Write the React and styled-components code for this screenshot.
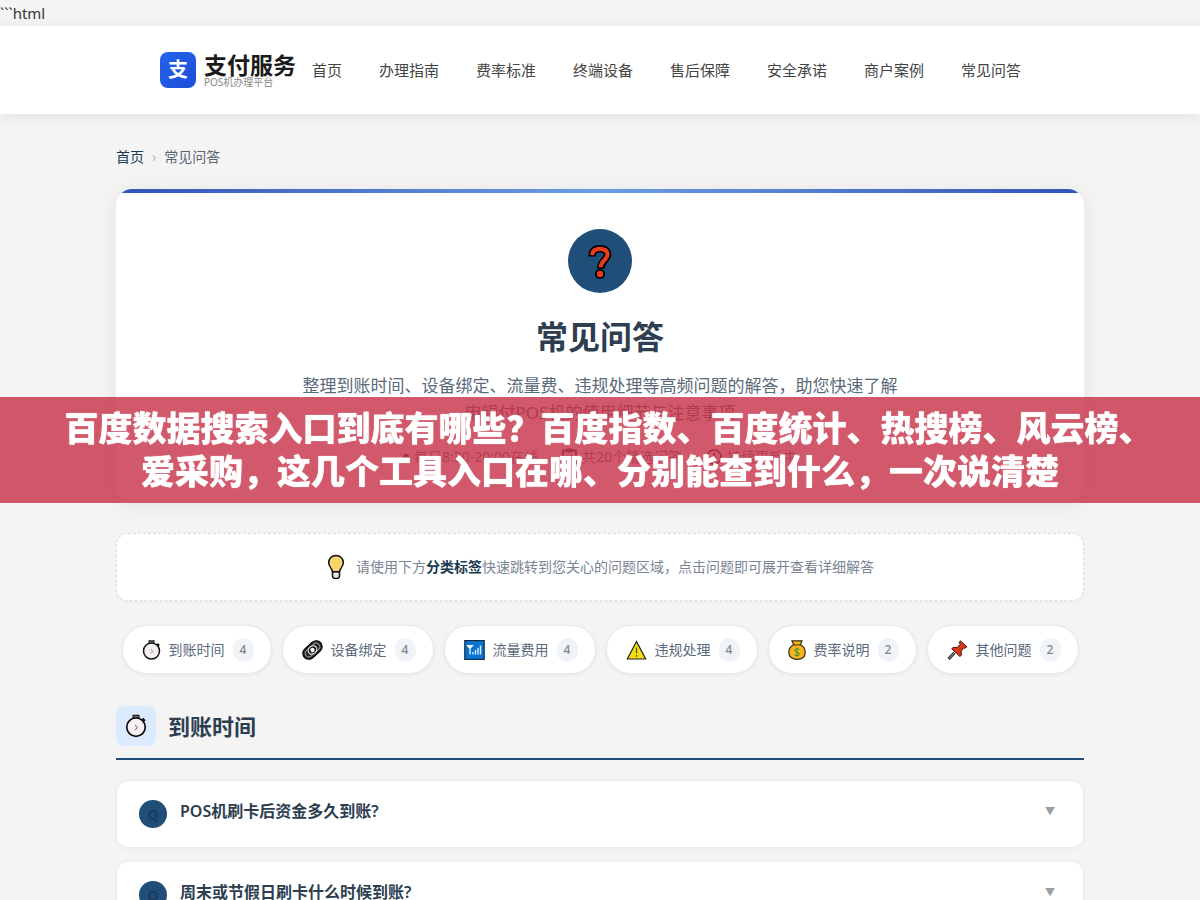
import React, { useState } from "react";
import styled, { createGlobalStyle } from "styled-components";

const navy = "#1f4e79";

const GlobalStyle = createGlobalStyle`
  * { box-sizing: border-box; }
  body {
    margin: 0;
    background: #f4f4f4;
    color: #333;
    font: 15px/26px "Noto Sans", "Noto Sans CJK SC", sans-serif;
  }
  a { color: inherit; text-decoration: none; }
  button { font: inherit; color: inherit; cursor: pointer; }
`;

const Header = styled.header`
  background: #fff;
  box-shadow: 0 2px 12px rgba(0, 0, 0, 0.08);
`;
const HeaderInner = styled.div`
  max-width: 880px;
  min-height: 88px;
  margin: 0 auto;
  display: flex;
  align-items: center;
  gap: 16px;
`;
const Logo = styled.a`
  display: flex;
  align-items: center;
  gap: 8px;
  white-space: nowrap;
`;
const LogoMark = styled.span`
  width: 36px;
  height: 36px;
  border-radius: 8px;
  background: linear-gradient(135deg, #2563eb, #1d4ed8);
  color: #fff;
  font-size: 20px;
  font-weight: 700;
  line-height: 36px;
  text-align: center;
`;
const LogoText = styled.span`
  display: flex;
  flex-direction: column;
`;
const LogoName = styled.strong`
  font-size: 23px;
  line-height: 24px;
  color: #1a1a1a;
`;
const LogoSub = styled.small`
  font-size: 10px;
  line-height: 10px;
  color: #888;
`;
const Nav = styled.nav`
  display: flex;
  gap: 37px;
  font-size: 15px;
  color: #444;
  white-space: nowrap;
`;

const Main = styled.main`
  max-width: 1000px;
  margin: 0 auto;
  padding: 32px 16px;
`;
const Breadcrumb = styled.nav`
  display: flex;
  gap: 8px;
  margin-bottom: 21px;
  font-size: 14px;
  line-height: 22px;
  color: #5a6570;
  a { color: #1a3a52; }
  i { font-style: normal; color: #bbb; }
`;

const Hero = styled.section`
  display: flex;
  flex-direction: column;
  align-items: center;
  padding-bottom: 31px;
  border-radius: 16px;
  background: #fff;
  box-shadow: 0 4px 20px rgba(0, 0, 0, 0.08);
  overflow: hidden;
  &::before {
    content: "";
    align-self: stretch;
    height: 4px;
    margin-bottom: 36px;
    background: linear-gradient(90deg, #2f55b8, #6c9ce6 50%, #2f55b8);
  }
`;
const HeroBadge = styled.div`
  display: grid;
  place-items: center;
  width: 64px;
  height: 64px;
  border-radius: 50%;
  background: ${navy};
`;
const HeroTitle = styled.h1`
  margin: 21px 0 12px;
  font-size: 32px;
  line-height: 46px;
  color: #2c3e50;
`;
const HeroText = styled.p`
  max-width: 600px;
  margin: 0 0 18px;
  font-size: 17px;
  line-height: 27px;
  text-align: center;
  color: #5a6a7a;
`;
const HeroMeta = styled.div`
  display: flex;
  gap: 24px;
  font-size: 14px;
  color: #6a7683;
`;
const MetaItem = styled.span`
  display: flex;
  align-items: center;
  gap: 5px;
`;
const Dot = styled.span`
  width: 6px;
  height: 6px;
  border-radius: 50%;
  background: #333;
`;

const Hint = styled.p`
  display: flex;
  align-items: center;
  justify-content: center;
  gap: 10px;
  min-height: 68px;
  margin: 32px 0 24px;
  border: 1px dashed #dcdcdc;
  border-radius: 12px;
  background: #fff;
  box-shadow: 0 1px 4px rgba(0, 0, 0, 0.04);
  font-size: 14px;
  color: #7a8594;
  strong { color: #1a3a52; }
`;

const Tabs = styled.nav`
  display: flex;
  flex-wrap: wrap;
  justify-content: center;
  gap: 10px;
  margin-bottom: 32px;
`;
const Tab = styled.a`
  display: flex;
  align-items: center;
  gap: 8px;
  height: 49px;
  padding: 0 17px 0 19px;
  border: 1px solid #e8e8e8;
  border-radius: 25px;
  background: #fff;
  box-shadow: 0 1px 4px rgba(0, 0, 0, 0.06);
  font-size: 14px;
  color: #5a6a7a;
`;
const Count = styled.span`
  min-width: 21px;
  border-radius: 12px;
  background: #f0f4f8;
  font-size: 12px;
  line-height: 24px;
  font-weight: 500;
  text-align: center;
  color: #808790;
`;

const SectionHead = styled.header`
  display: flex;
  align-items: center;
  gap: 12px;
  margin-bottom: 20px;
  padding-bottom: 12px;
  border-bottom: 2px solid ${navy};
`;
const SectionIcon = styled.span`
  display: grid;
  place-items: center;
  width: 40px;
  height: 40px;
  border-radius: 8px;
  background: #dbeafe;
`;
const SectionTitle = styled.h2`
  margin: 0;
  font-size: 22px;
  line-height: 32px;
  color: #2c3e50;
`;
const List = styled.div`
  display: grid;
  gap: 13px;
`;
const Question = styled.button`
  display: flex;
  align-items: flex-start;
  gap: 13px;
  width: 100%;
  padding: 19px 28px 19px 22px;
  border: 1px solid #ececec;
  border-radius: 12px;
  background: #fff;
  box-shadow: 0 1px 4px rgba(0, 0, 0, 0.04);
  text-align: left;
`;
const QMark = styled.span`
  width: 28px;
  height: 28px;
  border-radius: 50%;
  background: ${navy};
  color: #1a3a5c;
  font-size: 14px;
  font-weight: 700;
  line-height: 30px;
  text-align: center;
`;
const QText = styled.span`
  flex: 1;
  font-size: 16px;
  font-weight: 600;
  line-height: 22px;
  color: #2c3e50;
`;
const Arrow = styled.span`
  font-size: 10px;
  line-height: 22px;
  color: #999ca3;
`;

const Banner = styled.div`
  position: fixed;
  left: 0;
  right: 0;
  top: 397px;
  padding: 10px 46px;
  background: rgba(197, 48, 70, 0.8);
  color: #fff;
  font-size: 34px;
  font-weight: 900;
  line-height: 43px;
  text-align: center;
  text-indent: 17px;
  text-shadow: 0 0 1px #fff;
`;

const StopwatchIcon = ({ w = 19, h = 20 }) => (
  <svg width={w} height={h} viewBox="0 0 19 20" fill="none" stroke="#111">
    <rect x="7" y="0.8" width="5" height="3" fill="#777" />
    <path d="M14.800 4l2 2" strokeWidth="3" />
    <circle cx="9.5" cy="11" r="8" fill="#f5f0f2" strokeWidth="1.5" />
    <path d="M8.600 9l2.200 2.400-2.200 2.200" stroke="#a87e8c" />
  </svg>
);
const LinkIcon = () => (
  <svg width="21" height="20" viewBox="0 0 21 20" fill="none">
    <g transform="rotate(-42 10.5 10)">
      <rect x="-0.5" y="4" width="22" height="12" rx="6" fill="#222" stroke="#000" />
      <rect x="2" y="6.400" width="17" height="7.200" rx="3.600" stroke="#999" />
      <ellipse cx="10.5" cy="10" rx="4.600" ry="3.800" fill="#111" stroke="#eee" strokeWidth="1.200" />
      <circle cx="10.5" cy="10" r="2.200" fill="#fff" />
    </g>
  </svg>
);
const SignalIcon = () => (
  <svg width="21" height="20" viewBox="0 0 21 20" fill="none">
    <rect x="0.8" y="0.5" width="19.4" height="19" fill="#0a74d0" stroke="#12283f" strokeWidth="1.2" />
    <path d="M3.5 5.5h5L6 8.5zM6 6v8.5" stroke="#fff" strokeWidth="1.2" />
    <path d="M9 14.5V12M11.5 14.5V10M14 14.5V8M16.5 14.5V5.5" stroke="#d9ecff" strokeWidth="1.4" />
  </svg>
);
const WarningIcon = () => (
  <svg width="21" height="20" viewBox="0 0 21 20" fill="none">
    <path d="M10.5 1.5L19.7 19H1.3z" fill="#f3dc14" stroke="#222" strokeWidth="1.2" />
    <path d="M10.5 7.5v6M10.5 15v1.8" stroke="#5a5010" strokeWidth="1.2" />
  </svg>
);
const MoneyIcon = () => (
  <svg width="18" height="20" viewBox="0 0 18 20" fill="none">
    <path d="M4 0.8h10l-1.6 4C16 6.6 17.2 9.5 17.2 12.5c0 4.5-3.5 6.8-8.2 6.8s-8.2-2.300-8.200-6.800C0.800 9.500 2 6.600 5.600 4.800z" fill="#f6b51c" stroke="#3a2a10" strokeWidth="1.2" />
    <path d="M5.300 4.900h7.400" stroke="#3a2a10" />
    <path d="M11.300 9.600c-1-1.200-4.400-1-4.400 1 0 2.100 4.500 1.200 4.500 3.300 0 2-3.600 2.100-4.700.7M9 7.800v9" stroke="#4c9a2a" strokeWidth="1.200" />
  </svg>
);
const PinIcon = () => (
  <svg width="21" height="20" viewBox="0 0 21 20" fill="none">
    <path d="M7.500 12.800L1.500 19" stroke="#222" strokeWidth="3" />
    <path d="M7.500 12.800L2 18.500" stroke="#bbb" strokeWidth="1" />
    <path d="M13.300 0.800l6.600 6-2 1.400-1.300-.3-2.500 3.400.3 3.900-1.500 1.200L4.700 8.800l1.500-1.300 3.800.1 3.100-3.200-.7-2z" fill="#d8371c" stroke="#4a160c" />
  </svg>
);
const BulbIcon = () => (
  <svg width="20" height="26" viewBox="0 0 20 26" fill="none">
    <path d="M6.500 17.500v4.700c0 1.400 1.200 2.300 3.500 2.300s3.500-.9 3.500-2.300v-4.700z" fill="#e8e8e8" stroke="#111" strokeWidth="1.500" />
    <path d="M10 1.500c-4.300 0-7.300 3.100-7.300 7.200 0 4 3.300 5.300 3.800 9h7c.5-3.700 3.800-5 3.800-9 0-4.100-3-7.200-7.300-7.200z" fill="#fcd56a" stroke="#111" strokeWidth="1.500" />
  </svg>
);
const QuestionIcon = () => (
  <svg width="24" height="38" viewBox="0 0 24 38" fill="none">
    <path d="M4.200 14.500C4.200 8.500 7 6.800 12 6.800c4.500 0 7.500 2 7.500 5.700 0 5-6.800 6.500-6.800 14.300" stroke="#000" strokeWidth="7.600" />
    <circle cx="12" cy="32" r="5" fill="#000" />
    <path d="M4 13C4.500 8.700 7.300 6.800 12 6.800c4.500 0 7.500 2 7.500 5.700 0 5-6.800 6.500-6.800 12.800" stroke="#ea3b20" strokeWidth="4.200" />
    <circle cx="12" cy="32" r="3.200" fill="#ea3b20" />
  </svg>
);
const ClipboardIcon = () => (
  <svg width="15" height="18" viewBox="0 0 15 18" fill="none" stroke="#222">
    <rect x="1" y="2.500" width="13" height="14.500" strokeWidth="1.600" />
    <path d="M5 1h5v3H5zM4 8h7M4 11h7M4 14h4" />
  </svg>
);
const ClockIcon = () => (
  <svg width="16" height="18" viewBox="0 0 16 18" fill="none" stroke="#222" strokeWidth="1.500">
    <circle cx="8" cy="9" r="7" />
    <path d="M8 4.500V9l3 2" />
  </svg>
);

const navItems = ["首页", "办理指南", "费率标准", "终端设备", "售后保障", "安全承诺", "商户案例", "常见问答"];
const tabs = [
  [StopwatchIcon, "到账时间", 4],
  [LinkIcon, "设备绑定", 4],
  [SignalIcon, "流量费用", 4],
  [WarningIcon, "违规处理", 4],
  [MoneyIcon, "费率说明", 2],
  [PinIcon, "其他问题", 2],
];
const questions = ["POS机刷卡后资金多久到账?", "周末或节假日刷卡什么时候到账?"];

export default function App() {
  const [open, setOpen] = useState(-1);
  return (
    <>
      <GlobalStyle />
      ```html
      <Header>
        <HeaderInner>
          <Logo href="#">
            <LogoMark>支</LogoMark>
            <LogoText>
              <LogoName>支付服务</LogoName>
              <LogoSub>POS机办理平台</LogoSub>
            </LogoText>
          </Logo>
          <Nav>
            {navItems.map((item) => <a href="#" key={item}>{item}</a>)}
          </Nav>
        </HeaderInner>
      </Header>
      <Main>
        <Breadcrumb>
          <a href="#">首页</a>
          <i>›</i>
          <span>常见问答</span>
        </Breadcrumb>
        <Hero>
          <HeroBadge><QuestionIcon /></HeroBadge>
          <HeroTitle>常见问答</HeroTitle>
          <HeroText>
            整理到账时间、设备绑定、流量费、违规处理等高频问题的解答，助您快速了解申银付POS机的使用细节与注意事项
          </HeroText>
          <HeroMeta>
            <MetaItem><Dot />每日8:30-20:00在线</MetaItem>
            <MetaItem><ClipboardIcon />共20个精选问答</MetaItem>
            <MetaItem><ClockIcon />持续更新中</MetaItem>
          </HeroMeta>
        </Hero>
        <Hint>
          <BulbIcon />
          <span>请使用下方<strong>分类标签</strong>快速跳转到您关心的问题区域，点击问题即可展开查看详细解答</span>
        </Hint>
        <Tabs>
          {tabs.map(([Icon, label, count]) => (
            <Tab href="#arrival" key={label}>
              <Icon />
              {label}
              <Count>{count}</Count>
            </Tab>
          ))}
        </Tabs>
        <section id="arrival">
          <SectionHead>
            <SectionIcon><StopwatchIcon w={22} h={24} /></SectionIcon>
            <SectionTitle>到账时间</SectionTitle>
          </SectionHead>
          <List>
            {questions.map((q, i) => (
              <Question key={q} aria-expanded={open === i} onClick={() => setOpen(open === i ? -1 : i)}>
                <QMark>Q</QMark>
                <QText>{q}</QText>
                <Arrow>▼</Arrow>
              </Question>
            ))}
          </List>
        </section>
      </Main>
      <Banner>
        百度数据搜索入口到底有哪些？百度指数、百度统计、热搜榜、风云榜、爱采购，这几个工具入口在哪、分别能查到什么，一次说清楚
      </Banner>
    </>
  );
}
